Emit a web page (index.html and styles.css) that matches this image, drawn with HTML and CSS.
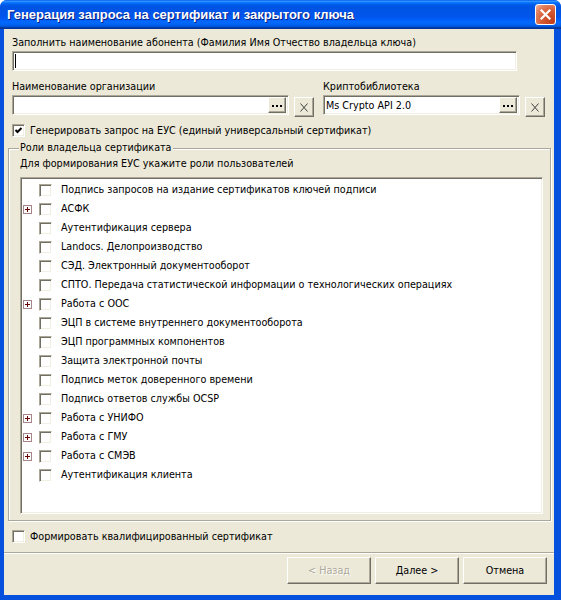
FILE: index.html
```html
<!DOCTYPE html>
<html>
<head>
	<meta charset="utf-8">
	<title>Генерация запроса на сертификат и закрытого ключа</title>
	<link rel="stylesheet" href="styles.css">
</head>
<body>
<div class="window">
	<div class="titlebar">
		<span class="title">Генерация запроса на сертификат и закрытого ключа</span>
		<span class="close">
			<svg width="11" height="11" viewBox="0 0 11 11"><path d="M1.5 1.5 L9.5 9.5 M9.5 1.5 L1.5 9.5" stroke="#fff" stroke-width="2.2" stroke-linecap="square"/></svg>
		</span>
	</div>

	<div class="client">
		<div class="label label-top">Заполнить наименование абонента (Фамилия Имя Отчество владельца ключа)</div>
		<div class="edit edit-wide"><span class="caret"></span></div>

		<div class="pickers">
			<div class="picker">
				<div class="label">Наименование организации</div>
				<div class="picker-line">
					<div class="edit edit-org">
						<span class="edit-text"></span>
						<span class="dots-btn"><svg width="10" height="2" viewBox="0 0 10 2"><rect x="0" y="0" width="2" height="2"/><rect x="4" y="0" width="2" height="2"/><rect x="8" y="0" width="2" height="2"/></svg></span>
					</div>
					<span class="clear-btn"><svg width="8" height="9" viewBox="0 0 8 9"><path d="M0.5 0.5 L7.5 8.5 M7.5 0.5 L0.5 8.5" stroke="#404040" stroke-width="1"/></svg></span>
				</div>
			</div>
			<div class="picker">
				<div class="label">Криптобиблиотека</div>
				<div class="picker-line">
					<div class="edit edit-lib">
						<span class="edit-text">Ms Crypto API 2.0</span>
						<span class="dots-btn"><svg width="10" height="2" viewBox="0 0 10 2"><rect x="0" y="0" width="2" height="2"/><rect x="4" y="0" width="2" height="2"/><rect x="8" y="0" width="2" height="2"/></svg></span>
					</div>
					<span class="clear-btn"><svg width="8" height="9" viewBox="0 0 8 9"><path d="M0.5 0.5 L7.5 8.5 M7.5 0.5 L0.5 8.5" stroke="#404040" stroke-width="1"/></svg></span>
				</div>
			</div>
		</div>

		<div class="check-row check-top">
			<span class="checkbox"><svg width="9" height="9" viewBox="0 0 9 9"><path d="M1.5 4 L3.5 6 L7.5 2" stroke="#000" stroke-width="2" fill="none"/></svg></span>
			<span class="check-text">Генерировать запрос на ЕУС (единый универсальный сертификат)</span>
		</div>

		<fieldset class="roles">
			<legend>Роли владельца сертификата</legend>
			<div class="roles-hint">Для формирования ЕУС укажите роли пользователей</div>
			<div class="tree">
				<div class="tree-row"><span class="expander empty"></span><span class="checkbox"></span><span class="tree-text">Подпись запросов на издание сертификатов ключей подписи</span></div>
				<div class="tree-row"><span class="expander"></span><span class="checkbox"></span><span class="tree-text">АСФК</span></div>
				<div class="tree-row"><span class="expander empty"></span><span class="checkbox"></span><span class="tree-text">Аутентификация сервера</span></div>
				<div class="tree-row"><span class="expander empty"></span><span class="checkbox"></span><span class="tree-text">Landocs. Делопроизводство</span></div>
				<div class="tree-row"><span class="expander empty"></span><span class="checkbox"></span><span class="tree-text">СЭД. Электронный документооборот</span></div>
				<div class="tree-row"><span class="expander empty"></span><span class="checkbox"></span><span class="tree-text">СПТО. Передача статистической информации о технологических операциях</span></div>
				<div class="tree-row"><span class="expander"></span><span class="checkbox"></span><span class="tree-text">Работа с ООС</span></div>
				<div class="tree-row"><span class="expander empty"></span><span class="checkbox"></span><span class="tree-text">ЭЦП в системе внутреннего документооборота</span></div>
				<div class="tree-row"><span class="expander empty"></span><span class="checkbox"></span><span class="tree-text">ЭЦП программных компонентов</span></div>
				<div class="tree-row"><span class="expander empty"></span><span class="checkbox"></span><span class="tree-text">Защита электронной почты</span></div>
				<div class="tree-row"><span class="expander empty"></span><span class="checkbox"></span><span class="tree-text">Подпись меток доверенного времени</span></div>
				<div class="tree-row"><span class="expander empty"></span><span class="checkbox"></span><span class="tree-text">Подпись ответов службы OCSP</span></div>
				<div class="tree-row"><span class="expander"></span><span class="checkbox"></span><span class="tree-text">Работа с УНИФО</span></div>
				<div class="tree-row"><span class="expander"></span><span class="checkbox"></span><span class="tree-text">Работа с ГМУ</span></div>
				<div class="tree-row"><span class="expander"></span><span class="checkbox"></span><span class="tree-text">Работа с СМЭВ</span></div>
				<div class="tree-row"><span class="expander empty"></span><span class="checkbox"></span><span class="tree-text">Аутентификация клиента</span></div>
			</div>
		</fieldset>

		<div class="check-row check-bottom">
			<span class="checkbox"></span>
			<span class="check-text">Формировать квалифицированный сертификат</span>
		</div>

		<div class="separator"></div>

		<div class="buttons">
			<span class="button disabled">&lt; Назад</span>
			<span class="button">Далее &gt;</span>
			<span class="button">Отмена</span>
		</div>
	</div>
</div>
</body>
</html>
```

FILE: styles.css
```css
body{
	margin:0;
	font-family: "DejaVu Sans Condensed", "Liberation Sans", Arial, sans-serif;
	font-size:10.7px;
	color:#000;
}
.window{
	width:561px;
	height:600px;
	background:#0550dc;
	border-radius:7px 7px 0 0;
	overflow:hidden;
	display:flex;
	flex-direction:column;
}

/* title bar */
.titlebar{
	height:29px;
	flex:none;
	box-sizing:border-box;
	padding:0 5px 0 7px;
	display:flex;
	align-items:center;
	justify-content:space-between;
	background:linear-gradient(to bottom, #0058ee 0%, #3593ff 4%, #288eff 6%, #127dff 8%, #036ffc 10%, #0262ee 14%, #0057e5 20%, #0054e3 24%, #0055eb 56%, #005bf5 66%, #026afe 76%, #0062ef 86%, #0052d6 92%, #0040ab 94%, #003092 100%);
}
.title{
	font-family: "Liberation Sans", Arial, sans-serif;
	color:#fff;
	font-weight:bold;
	font-size:13px;
	text-shadow:1px 1px #0a1e80;
}
.close{
	width:21px;
	height:21px;
	box-sizing:border-box;
	border:1px solid #fff;
	border-radius:3px;
	background:radial-gradient(circle at 85% 85%, #c1401c 0%, #d65a33 45%, #e2805f 75%, #f1b7a1 100%);
	display:flex;
	align-items:center;
	justify-content:center;
}

/* client area */
.client{
	flex:1;
	margin:0 7px 5px 4px;
	background:#ece9d8;
	display:flex;
	flex-direction:column;
}
.label{
	line-height:14px;
	white-space:nowrap;
}
.label-top{
	margin:7px 0 0 8px;
}
.edit{
	height:20px;
	box-sizing:border-box;
	background:#fff;
	border:1px solid;
	border-color:#aca899 #fff #fff #aca899;
	box-shadow:inset 1px 1px #716f64, inset -1px -1px #f1efe2;
	display:flex;
	align-items:center;
}
.edit-wide{
	width:505px;
	margin:1px 0 0 8px;
}
.caret{
	width:1px;
	height:14px;
	background:#000;
	margin-left:2px;
}
.pickers{
	display:flex;
	gap:9px;
	margin:9px 0 0 8px;
}
.picker-line{
	display:flex;
	align-items:flex-start;
	margin-top:1px;
}
.edit-org{
	width:277px;
}
.edit-lib{
	width:197px;
}
.edit-text{
	flex:1;
	padding-left:2px;
	white-space:nowrap;
}
.dots-btn{
	width:18px;
	height:16px;
	margin-right:2px;
	box-sizing:border-box;
	background:#ece9d8;
	border:1px solid;
	border-color:#fff #716f64 #716f64 #fff;
	box-shadow:inset -1px -1px #aca899;
	display:flex;
	align-items:center;
	justify-content:center;
	padding-top:2px;
}
.clear-btn{
	width:20px;
	height:20px;
	margin:2px 0 0 5px;
	box-sizing:border-box;
	background:#ece9d8;
	border:1px solid;
	border-color:#fff #716f64 #716f64 #fff;
	box-shadow:inset -1px -1px #aca899;
	display:flex;
	align-items:center;
	justify-content:center;
	padding-top:1px;
}

/* check boxes */
.check-row{
	display:flex;
	align-items:center;
	height:13px;
	margin-left:8px;
}
.check-top{
	margin-top:7px;
}
.check-bottom{
	margin-top:9px;
}
.checkbox{
	width:13px;
	height:13px;
	flex:none;
	box-sizing:border-box;
	background:#fff;
	border:1px solid;
	border-color:#aca899 #fff #fff #aca899;
	box-shadow:inset 1px 1px #716f64, inset -1px -1px #f1efe2;
	display:flex;
	align-items:center;
	justify-content:center;
}
.check-text{
	margin-left:5px;
	white-space:nowrap;
}

/* group box */
.roles{
	margin:4px 3px 0 4px;
	padding:1px 7px 6px 11px;
	border:1px solid #aca899;
	box-shadow:inset 1px 1px #fff, 1px 1px #fff;
	min-width:0;
}
.roles legend{
	padding:0 1px;
	margin-left:-1px;
	line-height:14px;
	background:#ece9d8;
}
.roles-hint{
	line-height:14px;
	padding-top:1px;
}
.tree{
	margin-top:6px;
	height:337px;
	box-sizing:border-box;
	background:#fff;
	border:1px solid;
	border-color:#aca899 #fff #fff #aca899;
	box-shadow:inset 1px 1px #716f64, inset -1px -1px #f1efe2;
	padding:2px 0 0 0;
}
.tree-row{
	height:19px;
	display:flex;
	align-items:center;
	padding-left:2px;
	white-space:nowrap;
}
.expander{
	width:9px;
	height:9px;
	flex:none;
	box-sizing:border-box;
	border:1px solid #a58588;
	background:
		linear-gradient(#6b0000, #6b0000) center / 5px 1px no-repeat,
		linear-gradient(#6b0000, #6b0000) center / 1px 5px no-repeat,
		#fff;
	margin-top:1px;
}
.expander.empty{
	visibility:hidden;
}
.tree-row .checkbox{
	margin-left:7px;
	margin-top:2px;
}
.tree-text{
	margin-left:9px;
}

/* bottom */
.separator{
	margin-top:9px;
	border-top:1px solid #aca899;
	border-bottom:1px solid #fff;
}
.buttons{
	display:flex;
	justify-content:flex-end;
	gap:4px;
	margin-top:3px;
	padding-right:7px;
}
.button{
	width:84px;
	height:27px;
	box-sizing:border-box;
	background:#ece9d8;
	border:1px solid;
	border-color:#fff #716f64 #716f64 #fff;
	box-shadow:inset -1px -1px #aca899;
	display:flex;
	align-items:center;
	justify-content:center;
}
.button.disabled{
	color:#aca899;
	text-shadow:1px 1px #fff;
}
```
